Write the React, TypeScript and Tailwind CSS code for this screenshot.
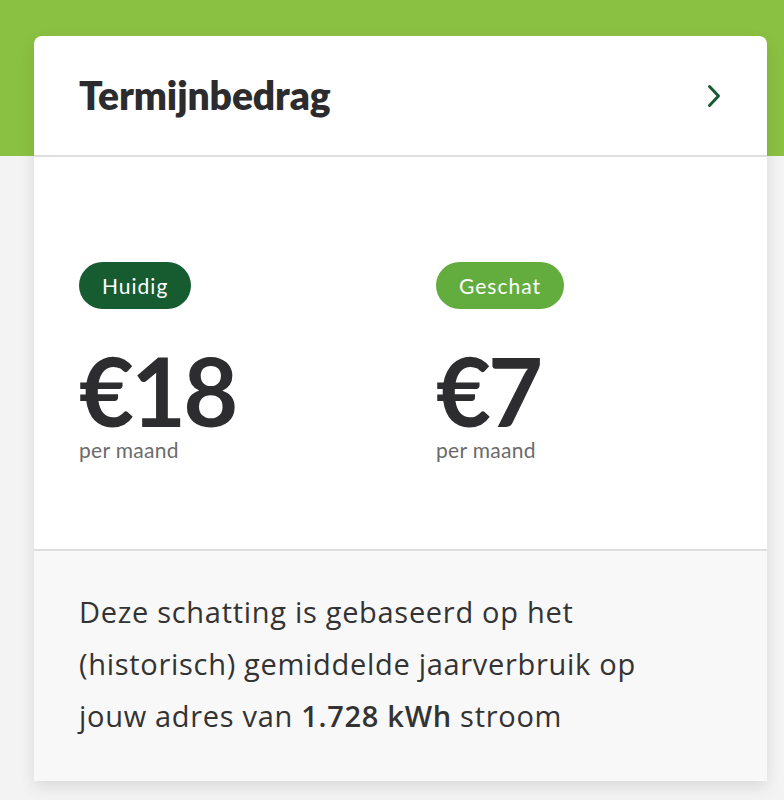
import React from "react";

export default function App() {
  return (
    <div
      className="relative w-[784px] h-[800px] overflow-hidden bg-[#f3f3f3]"
      style={{ fontFamily: "Lato, 'Open Sans', sans-serif" }}
    >
      <div className="absolute left-0 top-0 w-full h-[156px] bg-[#8bc142]" />
      <div className="relative pt-[36px] pl-[34px] pr-[17px]">
        <div className="rounded-t-[8px] bg-white shadow-[0_6px_16px_rgba(0,0,0,0.10)] overflow-hidden">
          <div className="h-[121px] flex items-center justify-between pl-[45px] pr-[46px] border-b-2 border-[#dedede]">
            <h1 className="text-[39px] font-extrabold text-[#2c2c2e] tracking-[-0.1px] leading-none">
              Termijnbedrag
            </h1>
            <svg width="14" height="24" viewBox="0 0 14 24" fill="none">
              <path d="M2.5 2.5 L11.5 12 L2.5 21.5" stroke="#1a5a32" strokeWidth="3" strokeLinecap="round" strokeLinejoin="round" />
            </svg>
          </div>
          <div className="h-[394px] border-b-2 border-[#dedede] grid grid-cols-[357px_1fr] pl-[45px] pt-[105px]">
            <div className="flex flex-col items-start">
              <span className="h-[47px] px-[23px] rounded-full bg-[#175c30] text-white text-[21px] tracking-[1px] flex items-center">
                Huidig
              </span>
              <div className="mt-[41px] h-[80px] text-[95px] font-bold text-[#2d2d2f] leading-[80px] tracking-[-3px]">€18</div>
              <div className="mt-[8px] text-[21px] text-[#6b6b6b] leading-[24px] tracking-[0.3px]">per maand</div>
            </div>
            <div className="flex flex-col items-start">
              <span className="h-[47px] px-[23px] rounded-full bg-[#62ad3e] text-white text-[21px] tracking-[1px] flex items-center">
                Geschat
              </span>
              <div className="mt-[41px] h-[80px] text-[95px] font-bold text-[#2d2d2f] leading-[80px] tracking-[-3px]">€7</div>
              <div className="mt-[8px] text-[21px] text-[#6b6b6b] leading-[24px] tracking-[0.3px]">per maand</div>
            </div>
          </div>
          <div className="h-[230px] bg-[#f8f8f8] pl-[45px] pr-[20px] pt-[35px]">
            <p
              className="text-[29px] leading-[52px] text-[#333] tracking-[0.7px]"
              style={{ fontFamily: "'Open Sans', sans-serif" }}
            >
              Deze schatting is gebaseerd op het
              <br />
              (historisch) gemiddelde jaarverbruik op
              <br />
              jouw adres van <strong className="font-semibold">1.728 kWh</strong> stroom
            </p>
          </div>
        </div>
      </div>
    </div>
  );
}
